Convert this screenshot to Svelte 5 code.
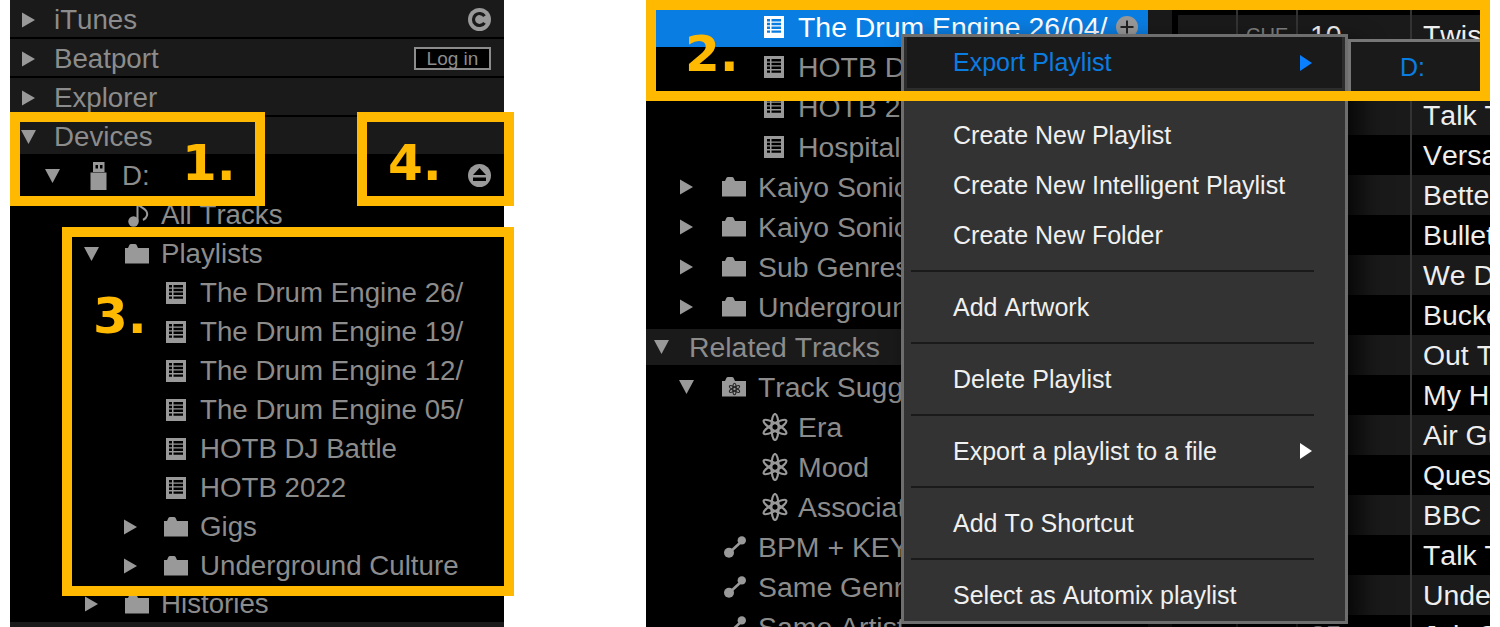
<script>
  // sidebar trees: pad is the arrow's left offset inside the panel
  const leftTree = [
    { pad: 35, arrow: "d", icon: "usb", label: "D:", eject: true },
    { pad: 74, icon: "note", label: "All Tracks" },
    { pad: 74, arrow: "d", icon: "folder", label: "Playlists" },
    { pad: 113, icon: "list", label: "The Drum Engine 26/" },
    { pad: 113, icon: "list", label: "The Drum Engine 19/" },
    { pad: 113, icon: "list", label: "The Drum Engine 12/" },
    { pad: 113, icon: "list", label: "The Drum Engine 05/" },
    { pad: 113, icon: "list", label: "HOTB DJ Battle" },
    { pad: 113, icon: "list", label: "HOTB 2022" },
    { pad: 113, arrow: "r", icon: "folder", label: "Gigs" },
    { pad: 113, arrow: "r", icon: "folder", label: "Underground Culture" },
    { pad: 74, arrow: "r", icon: "folder", label: "Histories", last: true },
  ];

  const rightTop = [
    { pad: 73, icon: "list", label: "HOTB DJ Battle" },
    { pad: 73, icon: "list", label: "HOTB 2022" },
    { pad: 73, icon: "list", label: "Hospital" },
    { pad: 33, arrow: "r", icon: "folder", label: "Kaiyo Sonic" },
    { pad: 33, arrow: "r", icon: "folder", label: "Kaiyo Sonic" },
    { pad: 33, arrow: "r", icon: "folder", label: "Sub Genres" },
    { pad: 33, arrow: "r", icon: "folder", label: "Underground" },
  ];

  const rightBottom = [
    { pad: 33, arrow: "d", icon: "smart", label: "Track Suggestions" },
    { pad: 73, icon: "atom", label: "Era" },
    { pad: 73, icon: "atom", label: "Mood" },
    { pad: 73, icon: "atom", label: "Association" },
    { pad: 33, icon: "link", label: "BPM + KEY" },
    { pad: 33, icon: "link", label: "Same Genre" },
    { pad: 33, icon: "link", label: "Same Artist" },
  ];

  const tracks = [
    { cue: "CUE", num: "10", title: "Twis" },
    { title: "" },
    { title: "Talk T" },
    { title: "Versa" },
    { title: "Bette" },
    { title: "Bullet" },
    { title: "We D" },
    { title: "Bucke" },
    { title: "Out T" },
    { title: "My Ha" },
    { title: "Air Gu" },
    { title: "Ques" },
    { title: "BBC" },
    { title: "Talk T" },
    { title: "Unde" },
    { num: "35", title: "Job C" },
  ];

  const menuGroups = [
    [{ label: "Create New Playlist" }, { label: "Create New Intelligent Playlist" }, { label: "Create New Folder" }],
    [{ label: "Add Artwork" }],
    [{ label: "Delete Playlist" }],
    [{ label: "Export a playlist to a file", more: true }],
    [{ label: "Add To Shortcut" }],
    [{ label: "Select as Automix playlist" }],
  ];
</script>

{#snippet arrow(dir)}
  <span class="arrow">
    {#if dir === "r"}
      <svg width="16" height="16" viewBox="0 0 16 16"><path d="M1 0.5 14 8 1 15.5z" /></svg>
    {:else if dir === "d"}
      <svg width="16" height="16" viewBox="0 0 16 16"><path d="M0 1h15L7.5 15z" /></svg>
    {/if}
  </span>
{/snippet}

{#snippet icon(name)}
  <span class="icon">
    {#if name === "list"}
      <svg class="i-list" width="20" height="22" viewBox="0 0 20 22">
        <rect width="20" height="22" class="fg" />
        <path class="bg" d="M3 3h3v2.4H3zM7.500 3H17v2.400H7.500zM3 6.800h3v2.400H3zM7.500 6.800H17v2.400H7.500zM3 10.600h3V13H3zM7.500 10.600H17V13H7.500zM3 14.400h3v2.400H3zM7.500 14.400H17v2.400H7.500z" />
      </svg>
    {:else if name === "folder"}
      <svg class="i-folder" width="24" height="20" viewBox="0 0 24 20">
        <path class="fg" d="M0 19.500V4h3l1.500-3.200Q5 0 6 0h4q1 0 1.500.8L13 4h11v15.500z" />
      </svg>
    {:else if name === "smart"}
      <svg class="i-folder" width="24" height="20" viewBox="0 0 24 20">
        <path class="fg" d="M0 19.500V4h3l1.500-3.200Q5 0 6 0h4q1 0 1.500.8L13 4h11v15.500z" />
        <g class="dark-lines" transform="translate(12.500 12)">
          <ellipse rx="1.700" ry="5.800" />
          <ellipse rx="1.700" ry="5.800" transform="rotate(60)" />
          <ellipse rx="1.700" ry="5.800" transform="rotate(-60)" />
        </g>
      </svg>
    {:else if name === "atom"}
      <svg class="i-atom" width="26" height="28" viewBox="0 0 26 28">
        <g class="fg-lines" transform="translate(13 14)">
          <ellipse rx="3.600" ry="13" />
          <ellipse rx="3.600" ry="13" transform="rotate(60)" />
          <ellipse rx="3.600" ry="13" transform="rotate(-60)" />
        </g>
      </svg>
    {:else if name === "link"}
      <svg class="i-link" width="22" height="22" viewBox="0 0 22 22">
        <path class="fg-lines thick" d="M5 17 18 5" />
        <circle class="fg" cx="5" cy="16.800" r="5" />
        <circle class="fg" cx="17.800" cy="4.400" r="4.200" />
      </svg>
    {:else if name === "usb"}
      <svg class="i-usb" width="17" height="28" viewBox="0 0 17 28">
        <path class="fg" d="M3 0h11.500v10H3zM0.500 10.500h16V28H.5z" />
        <path class="bg" d="M5.500 3h2.500v3.500H5.500zM10 3h2.500v3.500H10z" />
      </svg>
    {:else if name === "note"}
      <svg class="i-note" width="22" height="24" viewBox="0 0 22 24">
        <circle class="fg" cx="5.500" cy="18.500" r="5.200" />
        <path class="fg-lines" d="M9.500 18V1c3 4 11 5 9.500 11.500-.5 2-2 3.500-4 4.500" />
      </svg>
    {/if}
  </span>
{/snippet}

{#snippet row(item)}
  <div class="row" class:last={item.last} style="padding-left: {item.pad}px">
    {@render arrow(item.arrow)}
    {@render icon(item.icon)}
    <span class="label">{item.label}</span>
    {#if item.eject}
      <svg class="side-icon" width="23" height="23" viewBox="0 0 23 23">
        <circle class="fg" cx="11.500" cy="11.500" r="11.500" />
        <path class="bg" d="M11.500 4 18 11H5zM5 13.500h13V17H5z" />
      </svg>
    {/if}
  </div>
{/snippet}

<div class="page">
  <aside class="panel left">
    <div class="head">
      {@render arrow("r")}
      <span class="label">iTunes</span>
      <svg class="side-icon" width="23" height="23" viewBox="0 0 23 23">
        <circle class="fg" cx="11.500" cy="11.500" r="11.500" />
        <path class="c-mark" d="M16.500 8.200a6 6 0 1 0 0 6.600" />
        <path class="head-fill" d="M12 10h5.500v3H12z" />
      </svg>
    </div>
    <div class="head">
      {@render arrow("r")}
      <span class="label">Beatport</span>
      <button class="login">Log in</button>
    </div>
    <div class="head">
      {@render arrow("r")}
      <span class="label">Explorer</span>
    </div>
    <div class="head">
      {@render arrow("d")}
      <span class="label">Devices</span>
    </div>
    {#each leftTree as item}
      {@render row(item)}
    {/each}
    <div class="head"></div>
  </aside>

  <section class="panel right">
    <div class="tree">
      <div class="row selected" style="padding-left: 73px">
        {@render arrow(null)}
        {@render icon("list")}
        <span class="label">The Drum Engine 26/04/</span>
        <svg class="add" width="22" height="22" viewBox="0 0 22 22">
          <circle cx="11" cy="11" r="11" fill="#999" />
          <path d="M11 4.500v13M4.500 11h13" stroke="#222" stroke-width="2" />
        </svg>
      </div>
      {#each rightTop as item}
        {@render row(item)}
      {/each}
      <div class="head">
        {@render arrow("d")}
        <span class="label">Related Tracks</span>
      </div>
      {#each rightBottom as item}
        {@render row(item)}
      {/each}
    </div>

    <div class="strip"></div>

    <div class="tracks">
      <div class="track spacer"><span></span><span></span><span></span><span></span></div>
      {#each tracks as t, i}
        <div class="track" class:odd={i % 2 === 0}>
          <span></span>
          <span class="cue">{t.cue ?? ""}</span>
          <span class="num">{t.num ?? ""}</span>
          <span class="title">{t.title}</span>
        </div>
      {/each}
    </div>

    <div class="menu">
      <div class="menu-item active">
        <span>Export Playlist</span>
        <svg width="12" height="16" viewBox="0 0 12 16"><path d="M0 0 12 8 0 16z" /></svg>
      </div>
      {#each menuGroups as group, i}
        {#if i > 0}<hr />{/if}
        {#each group as entry}
          <div class="menu-item">
            <span>{entry.label}</span>
            {#if entry.more}
              <svg width="12" height="16" viewBox="0 0 12 16"><path d="M0 0 12 8 0 16z" /></svg>
            {/if}
          </div>
        {/each}
      {/each}
    </div>

    <div class="submenu">D:</div>
  </section>

  <!-- annotation frames drawn over the screenshot -->
  <div class="frame f1"><b>1.</b></div>
  <div class="frame f2"><b>2.</b></div>
  <div class="frame f3"><b>3.</b></div>
  <div class="frame f4"><b>4.</b></div>
</div>

<style>
  :global(body) {
    margin: 0;
    background: #fff;
  }

  .page {
    position: relative;
    display: flex;
    gap: 142px;
    width: 1500px;
    height: 627px;
    padding-left: 10px;
    box-sizing: border-box;
    overflow: hidden;
    background: #fff;
    font-family: "Liberation Sans", Arial, sans-serif;
    font-kerning: none;
  }

  .panel {
    position: relative;
    height: 627px;
    overflow: hidden;
    background: #000;
    color: #8c8c8c;
  }

  .left {
    width: 494px;
    flex: none;
    font-size: 27.7px;
    --arrow-w: 41px;
    --icon-w: 36px;
    --head-arrow: 33px;
  }

  .right {
    display: flex;
    width: 844px;
    flex: none;
    font-size: 28.4px;
    --arrow-w: 43px;
    --icon-w: 36px;
    --head-arrow: 35px;
  }

  .fg { fill: #999; }
  .bg { fill: #000; }
  .head-fill { fill: #999; }
  .c-mark { fill: none; stroke: #1a1a1a; stroke-width: 3.200; }
  .fg-lines { fill: none; stroke: #999; stroke-width: 2; }
  .i-atom .fg-lines { stroke-width: 2.200; }
  .fg-lines.thick { stroke-width: 2.600; }
  .dark-lines { fill: none; stroke: #222; stroke-width: 1.100; }

  .head {
    display: flex;
    align-items: center;
    height: 37px;
    margin-bottom: 2px;
    padding: 2px 13px 0 11px;
    box-sizing: border-box;
    background: #1a1a1a;
  }

  .head .arrow {
    width: var(--head-arrow);
  }

  .head .bg { fill: #1a1a1a; }

  .right .head {
    height: 36px;
    margin-top: 2px;
    padding-top: 0;
    padding-left: 8px;
  }

  .row {
    display: flex;
    align-items: center;
    height: 39px;
    padding-right: 13px;
    white-space: nowrap;
  }

  .right .row {
    height: 40px;
  }

  .row.last {
    height: 37px;
  }

  .row.selected {
    box-sizing: content-box;
    padding-top: 7px;
    padding-right: 10px;
    background: #0a7de2;
    color: #fff;
  }

  .selected .fg { fill: #fff; }
  .selected .bg { fill: #0a7de2; }

  .add {
    margin-left: auto;
  }

  .arrow {
    display: flex;
    flex: none;
    width: var(--arrow-w);
  }

  .arrow path {
    fill: #999;
  }

  .icon {
    display: flex;
    flex: none;
    align-items: center;
    width: var(--icon-w);
  }

  .i-list { margin-left: 2px; }
  .i-note { margin-left: 3px; }
  .i-usb { margin-left: 4px; }
  .i-link { margin-left: 2px; }

  .label {
    line-height: 1;
  }

  .side-icon {
    margin-left: auto;
  }

  .login {
    margin-left: auto;
    width: 77px;
    height: 23px;
    padding: 0;
    box-sizing: border-box;
    border: 2px solid #8c8c8c;
    background: #000;
    color: #8c8c8c;
    font: 19px/19px "Liberation Sans", Arial, sans-serif;
  }

  .tree {
    flex: none;
    width: 502px;
  }

  .strip {
    flex: none;
    width: 24px;
    margin-right: 6px;
    background: #1a1a1a;
  }

  .tracks {
    flex: 1;
    min-width: 0;
  }

  .track {
    display: grid;
    grid-template-columns: 60px 60px 114px 1fr;
    height: 40px;
    align-items: stretch;
    line-height: 40px;
    color: #eee;
    white-space: nowrap;
    overflow: hidden;
  }

  .track.spacer {
    height: 15px;
  }

  .track.odd {
    background: #1a1a1a;
  }

  .track > span:not(:last-child) {
    border-right: 2px solid #333;
  }

  .cue {
    padding-left: 8px;
    color: #808080;
    font-size: 20px;
  }

  .num {
    padding-left: 12px;
  }

  .title {
    padding-left: 11px;
  }

  .menu {
    position: absolute;
    left: 255px;
    top: 34px;
    width: 447px;
    height: 590px;
    box-sizing: border-box;
    border: 3px solid #6e6e6e;
    background: #333;
    color: #f0f0f0;
    font-size: 25px;
    box-shadow: 12px 12px 24px rgba(0, 0, 0, 0.75);
  }

  .menu-item {
    display: flex;
    align-items: center;
    justify-content: space-between;
    height: 50px;
    padding: 0 33px 0 49px;
  }

  .menu-item svg {
    fill: #fff;
  }

  .menu-item.active {
    box-sizing: content-box;
    height: 51px;
    margin-bottom: 19px;
    padding: 0 30px 0 46px;
    border: solid #2c2c2c;
    border-width: 0 3px 3px;
    background: #1a1a1a;
    color: #0a7de2;
  }

  .active svg {
    fill: #0a80ff;
  }

  hr {
    height: 2px;
    margin: 10px 31px 10px 7px;
    border: 0;
    background: #1a1a1a;
  }

  .submenu {
    position: absolute;
    left: 702px;
    top: 39px;
    width: 160px;
    height: 56px;
    box-sizing: border-box;
    padding: 5px 0 0 49px;
    border: 3px solid #777;
    background: #1a1a1a;
    color: #0a7de2;
    font-size: 25px;
    line-height: 40px;
  }

  .frame {
    position: absolute;
    box-sizing: border-box;
    border: 10px solid #ffb900;
  }

  .frame b {
    position: absolute;
    color: #ffb900;
    font: bold 50px/50px "DejaVu Sans", sans-serif;
  }

  .f1 { left: 10px; top: 112px; width: 255px; height: 94px; }
  .f1 b { left: 162px; top: 16px; }

  .f2 { left: 646px; top: 0; width: 844px; height: 101px; }
  .f2 b { left: 29px; top: 19px; }

  .f3 { left: 62px; top: 227px; width: 452px; height: 369px; }
  .f3 b { left: 21px; top: 54px; }

  .f4 { left: 357px; top: 112px; width: 157px; height: 94px; }
  .f4 b { left: 21px; top: 16px; }
</style>
